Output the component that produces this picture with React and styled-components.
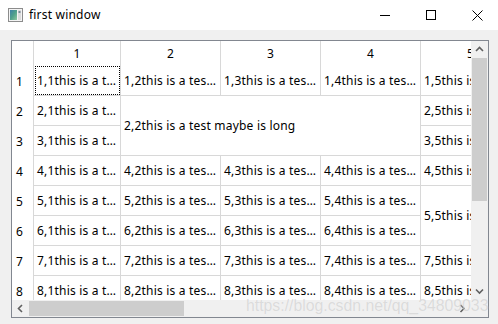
import React from "react";
import styled, { createGlobalStyle } from "styled-components";

const GlobalStyle = createGlobalStyle`
  html, body { margin: 0; padding: 0; background: #f0f0f0; }
`;

const Window = styled.div`
  position: relative;
  width: 498px;
  height: 324px;
  overflow: hidden;
  display: flex;
  flex-direction: column;
  background: #f0f0f0;
  font-family: "Noto Sans", "Open Sans", sans-serif;
  font-size: 12px;
  color: #000;
`;

const TitleBar = styled.div`
  height: 30px;
  flex: none;
  background: #fff;
  display: flex;
  align-items: center;
`;

const AppIcon = styled.svg`
  margin-left: 8px;
  flex: none;
`;

const Title = styled.span`
  margin-left: 6px;
  flex: 1;
  font-size: 12px;
  letter-spacing: 0.2px;
  padding-bottom: 2px;
`;

const Controls = styled.div`
  display: flex;
  height: 100%;
  margin-right: -2px;
`;

const CaptionButton = styled.div`
  width: 46px;
  height: 100%;
  display: flex;
  align-items: center;
  justify-content: center;
`;

const Content = styled.div`
  flex: 1;
  min-height: 0;
  display: flex;
  padding: 10px 9px 6px 11px;
`;

const Frame = styled.div`
  flex: 1;
  min-width: 0;
  border: 1px solid #828790;
  display: grid;
  grid-template-columns: 1fr 17px;
  grid-template-rows: 1fr 17px;
  background: #fff;
`;

const Viewport = styled.div`
  overflow: hidden;
  background: #fff;
  min-width: 0;
  min-height: 0;
`;

const Table = styled.div`
  display: grid;
  grid-template-columns: 22px 87px 100px 100px 100px 100px;
  grid-template-rows: 25px repeat(8, 30px);
  width: max-content;
  letter-spacing: 0.2px;
`;

const Corner = styled.div`
  border-right: 1px solid #d8d8d8;
`;

const ColHeader = styled.div`
  border-right: 1px solid #d8d8d8;
  display: flex;
  align-items: center;
  justify-content: center;
  white-space: nowrap;
`;

const RowHeader = styled.div`
  border-right: 1px solid #d8d8d8;
  display: flex;
  align-items: center;
  padding-left: 4px;
`;

const Cell = styled.div`
  position: relative;
  grid-column: span ${(p) => p.$cols || 1};
  grid-row: span ${(p) => p.$rows || 1};
  border-right: 1px solid #d8d8d8;
  border-bottom: 1px solid #d8d8d8;
  display: flex;
  align-items: center;
  padding-left: 3px;
  white-space: nowrap;
  overflow: hidden;
  ${(p) =>
    p.$focus &&
    `
    &::after {
      content: "";
      position: absolute;
      top: 0; left: 1px; right: 0; bottom: 0;
      border: 1px dotted #000;
    }
  `}
`;

const VScroll = styled.div`
  background: #f0f0f0;
  display: flex;
  flex-direction: column;
`;

const HScroll = styled.div`
  background: #f0f0f0;
  display: flex;
`;

const ScrollCorner = styled.div`
  background: #f0f0f0;
`;

const ArrowButton = styled.div`
  flex: none;
  width: 17px;
  height: 17px;
  display: flex;
  align-items: center;
  justify-content: center;
`;

const Track = styled.div`
  flex: 1;
  display: flex;
  flex-direction: ${(p) => (p.$vertical ? "column" : "row")};
`;

const Thumb = styled.div`
  flex: none;
  background: #cdcdcd;
  ${(p) =>
    p.$vertical
      ? `width: 15px; margin-left: 1px;`
      : `height: 15px; margin-top: 1px;`}
`;

const Watermark = styled.div`
  position: absolute;
  left: 246px;
  top: 298px;
  font-family: "Liberation Sans", Arial, sans-serif;
  font-size: 15.8px;
  line-height: 16px;
  color: rgba(185, 185, 185, 0.45);
  text-shadow: 0 0 1px rgba(255, 255, 255, 0.5);
  white-space: nowrap;
  pointer-events: none;
`;

const Chevron = ({ dir }) => {
  const pts = {
    up: "1,5 4.5,1.5 8,5",
    down: "1,1.5 4.5,5 8,1.5",
    left: "5,1 1.5,4.5 5,8",
    right: "1.5,1 5,4.5 1.5,8",
  }[dir];
  const vert = dir === "up" || dir === "down";
  return (
    <svg width={vert ? 9 : 7} height={vert ? 7 : 9} viewBox={vert ? "0 0 9 7" : "0 0 7 9"}>
      <polyline points={pts} fill="none" stroke="#606060" strokeWidth="1.6" />
    </svg>
  );
};

const elide1 = (r) => `${r},1this is a t…`;
const elide = (r, c) => `${r},${c}this is a tes…`;

export default function App() {
  const rows = [];
  for (let r = 1; r <= 8; r++) {
    rows.push(<RowHeader key={`h${r}`}>{r}</RowHeader>);
    rows.push(
      <Cell key={`${r}-1`} $focus={r === 1}>
        {elide1(r)}
      </Cell>
    );
    if (r === 2) {
      rows.push(
        <Cell key="2-2" $cols={3} $rows={2}>
          2,2this is a test maybe is long
        </Cell>
      );
    } else if (r !== 3) {
      for (let c = 2; c <= 4; c++) rows.push(<Cell key={`${r}-${c}`}>{elide(r, c)}</Cell>);
    }
    if (r === 5) {
      rows.push(
        <Cell key="5-5" $rows={2}>
          {elide(5, 5)}
        </Cell>
      );
    } else if (r !== 6) {
      rows.push(<Cell key={`${r}-5`}>{elide(r, 5)}</Cell>);
    }
  }

  return (
    <Window>
      <GlobalStyle />
      <TitleBar>
        <AppIcon width="15" height="14" viewBox="0 0 15 14">
          <defs>
            <linearGradient id="ig" x1="0" y1="0" x2="1" y2="1">
              <stop offset="0" stopColor="#3d7fa8" />
              <stop offset="0.5" stopColor="#4fa08a" />
              <stop offset="1" stopColor="#8fc7a0" />
            </linearGradient>
          </defs>
          <rect x="0.5" y="0.5" width="14" height="13" fill="#f4f4f4" stroke="#8c8c8c" />
          <rect x="2" y="2" width="7" height="10" fill="url(#ig)" />
          <rect x="10" y="2" width="3" height="10" fill="#dcdcdc" />
          <rect x="10.5" y="3" width="2" height="2" fill="#7a8a99" />
        </AppIcon>
        <Title>first window</Title>
        <Controls>
          <CaptionButton>
            <svg width="10" height="10" viewBox="0 0 10 10">
              <line x1="0" y1="5.5" x2="10" y2="5.5" stroke="#000" strokeWidth="1" />
            </svg>
          </CaptionButton>
          <CaptionButton>
            <svg width="10" height="10" viewBox="0 0 10 10">
              <rect x="0.5" y="0.5" width="9" height="9" fill="none" stroke="#000" strokeWidth="1" />
            </svg>
          </CaptionButton>
          <CaptionButton>
            <svg width="11" height="11" viewBox="0 0 11 11">
              <path d="M0.5 0.5 L10.5 10.5 M10.5 0.5 L0.5 10.5" stroke="#000" strokeWidth="1" />
            </svg>
          </CaptionButton>
        </Controls>
      </TitleBar>
      <Content>
        <Frame>
          <Viewport>
            <Table>
              <Corner />
              {[1, 2, 3, 4, 5].map((c) => (
                <ColHeader key={`c${c}`}>{c}</ColHeader>
              ))}
              {rows}
            </Table>
          </Viewport>
          <VScroll>
            <ArrowButton>
              <Chevron dir="up" />
            </ArrowButton>
            <Track $vertical>
              <Thumb $vertical style={{ height: 143 }} />
            </Track>
            <ArrowButton>
              <Chevron dir="down" />
            </ArrowButton>
          </VScroll>
          <HScroll>
            <ArrowButton>
              <Chevron dir="left" />
            </ArrowButton>
            <Track>
              <Thumb style={{ width: 155 }} />
            </Track>
            <ArrowButton>
              <Chevron dir="right" />
            </ArrowButton>
          </HScroll>
          <ScrollCorner />
        </Frame>
      </Content>
      <Watermark>https://blog.csdn.net/qq_34809033</Watermark>
    </Window>
  );
}
